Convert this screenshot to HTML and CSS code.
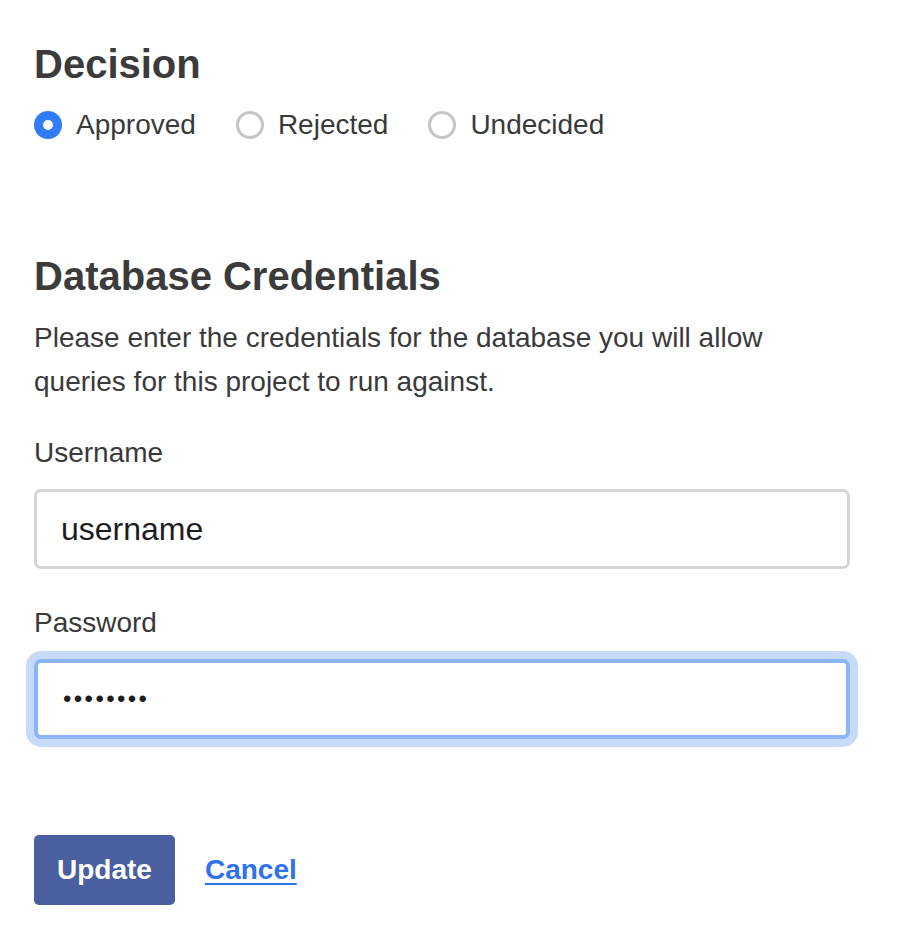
FILE: index.html
```html
<!DOCTYPE html>
<html lang="en">
<head>
<meta charset="utf-8">
<title>Decision</title>
<link rel="stylesheet" href="styles.css">
</head>
<body>
<main class="page">
  <section class="decision">
    <h2 class="heading">Decision</h2>
    <div class="radios">
      <label class="radio"><input type="radio" name="decision" class="radio-input" checked><span>Approved</span></label>
      <label class="radio"><input type="radio" name="decision" class="radio-input"><span>Rejected</span></label>
      <label class="radio"><input type="radio" name="decision" class="radio-input"><span>Undecided</span></label>
    </div>
  </section>

  <section class="credentials">
    <h2 class="heading">Database Credentials</h2>
    <p class="intro">Please enter the credentials for the database you will allow queries for this project to run against.</p>

    <div class="field">
      <label class="field-label" for="username">Username</label>
      <input class="field-input" id="username" type="text" value="username">
    </div>
    <div class="field">
      <label class="field-label" for="password">Password</label>
      <input class="field-input field-input--password is-focused" id="password" type="password" value="password">
    </div>
  </section>

  <div class="actions">
    <button class="btn-primary" type="button">Update</button>
    <a class="link" href="#">Cancel</a>
  </div>
</main>
</body>
</html>
```

FILE: styles.css
```css
* {
  box-sizing: border-box;
}

html, body {
  margin: 0;
  background: #ffffff;
}

body {
  font-family: "Liberation Sans", Arial, Helvetica, sans-serif;
  color: #3a3a3a;
  font-size: 28px;
  line-height: 44px;
}

.page {
  padding: 40px 0 0 34px;
  width: 850px;
}

.heading {
  margin: 0;
  font-size: 40px;
  line-height: 48px;
  font-weight: 700;
  color: #3b3b3b;
}

.radios {
  display: flex;
  align-items: center;
  gap: 40px;
  margin-top: 21px;
  height: 32px;
}

.radio {
  display: flex;
  align-items: center;
  gap: 14px;
  line-height: 32px;
  color: #3a3a3a;
}

.radio-input {
  appearance: none;
  -webkit-appearance: none;
  margin: 0;
  width: 28px;
  height: 28px;
  border-radius: 50%;
  border: 3px solid #c5c5c5;
  background: #ffffff;
}

.radio-input:checked {
  border: 9px solid #2f7cf6;
}

.credentials {
  margin-top: 111px;
}

.intro {
  margin: 16px 0 0;
}

.field {
  display: flex;
  flex-direction: column;
}

.credentials .field:first-of-type {
  margin-top: 27px;
}

.field + .field {
  margin-top: 32px;
}

.field-label {
  line-height: 44px;
}

.field-input {
  margin-top: 14px;
  width: 816px;
  height: 80px;
  border: 3px solid #d3d6d5;
  border-radius: 7px;
  padding: 0 24px;
  font-family: "Liberation Sans", Arial, Helvetica, sans-serif;
  font-size: 32px;
  color: #1d1d1f;
  background: #ffffff;
  outline: none;
}

.field-input--password {
  font-size: 24px;
  letter-spacing: 2.4px;
}

.field-input.is-focused {
  border: 4px solid #8cb5f7;
  box-shadow: 0 0 0 8px #c6dbfa;
  padding: 0 25px;
}

.actions {
  display: flex;
  align-items: center;
  gap: 30px;
  margin-top: 96px;
}

.btn-primary {
  height: 70px;
  padding: 0 23px;
  border: none;
  border-radius: 5px;
  background: #4a5f9f;
  color: #ffffff;
  font-family: "Liberation Sans", Arial, Helvetica, sans-serif;
  font-size: 28px;
  font-weight: 700;
  line-height: 32px;
}

.link {
  color: #2f72e9;
  font-weight: 700;
  text-decoration: underline;
  text-decoration-thickness: 2px;
  text-underline-offset: 4px;
}
```
